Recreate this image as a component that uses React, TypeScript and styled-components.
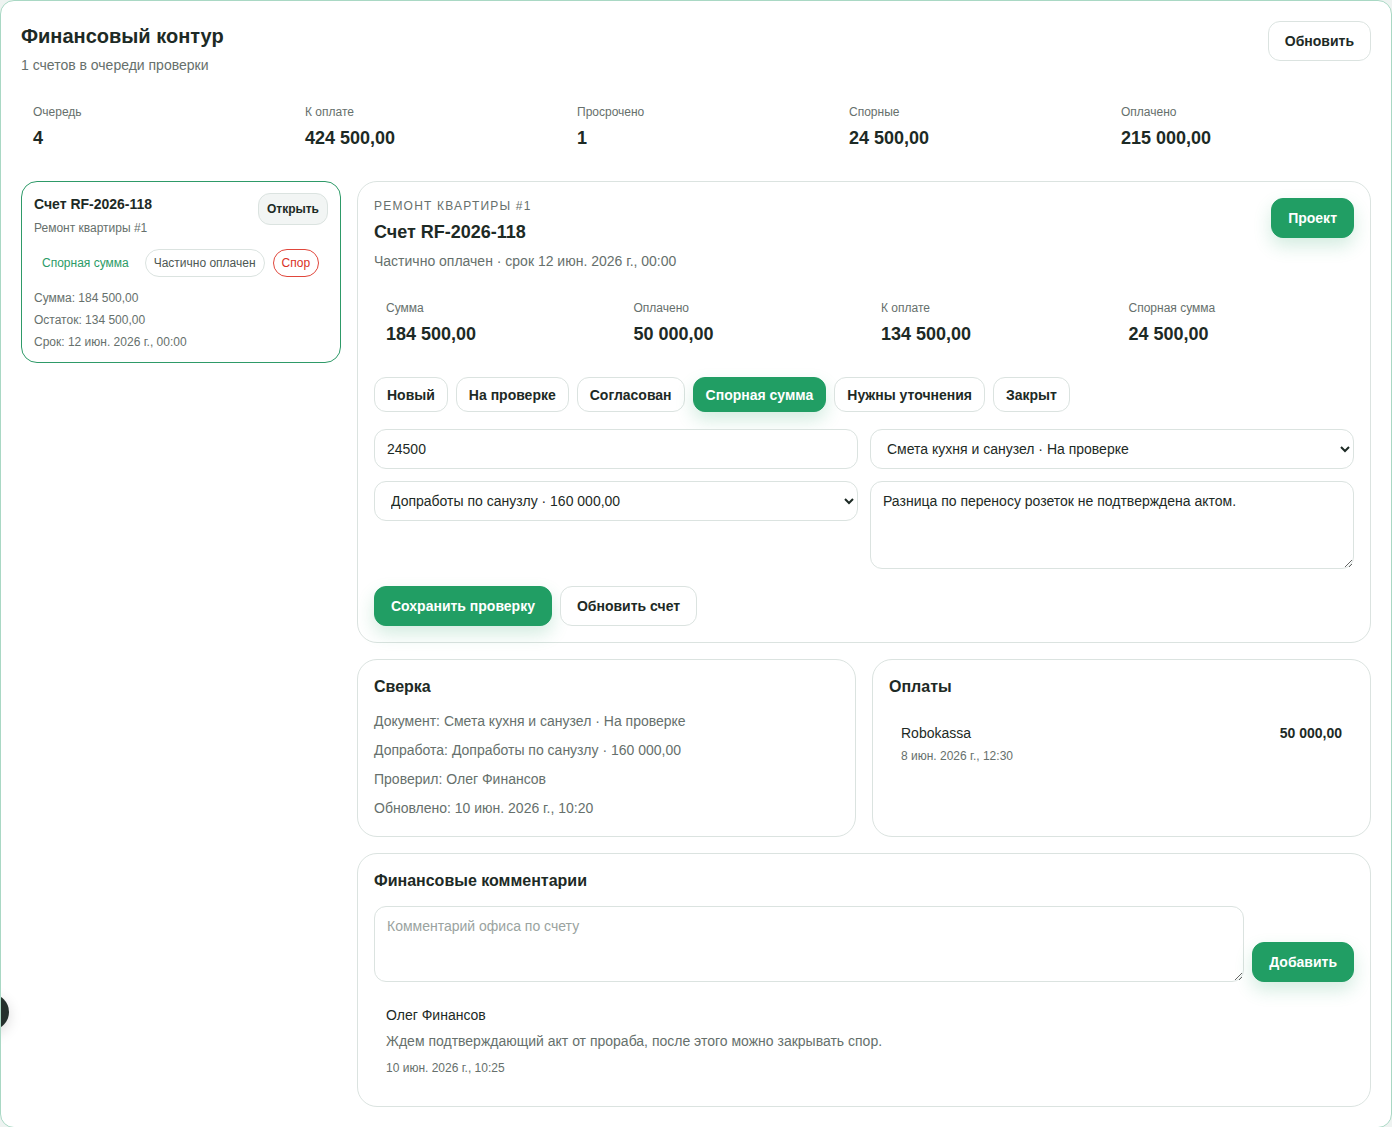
import React from 'react'
import styled, { createGlobalStyle, css } from 'styled-components'

const GlobalStyle = createGlobalStyle`
  * { box-sizing: border-box; }
  body {
    margin: 0;
    background: #eef3f1;
    font-family: 'Liberation Sans', Arial, sans-serif;
    color: #1d2a25;
  }
  button, input, select, textarea { font-family: inherit; }
`

const green = '#219e64'
const text = '#1d2a25'
const muted = '#66706c'
const line = '#dbe3e0'

const Frame = styled.div`
  position: relative;
  min-height: 1127px;
  padding: 20px;
  background: #fff;
  border: 1px solid #a9d8c4;
  border-radius: 14px;
  overflow: hidden;
`

const Header = styled.header`
  display: flex;
  justify-content: space-between;
  align-items: flex-start;
`

const PageTitle = styled.h1`
  margin: 0;
  font-size: 20px;
  line-height: 30px;
  font-weight: 700;
`

const PageSub = styled.div`
  margin-top: 4px;
  font-size: 14px;
  line-height: 20px;
  color: ${muted};
`

const Button = styled.button<{ $primary?: boolean; $small?: boolean }>`
  height: ${({ $small }) => ($small ? '32px' : '40px')};
  padding: 0 ${({ $small }) => ($small ? '8px' : '16px')};
  border-radius: 12px;
  border: 1px solid ${line};
  background: #fff;
  color: ${text};
  font-size: ${({ $small }) => ($small ? '12px' : '14px')};
  font-weight: 700;
  white-space: nowrap;
  cursor: pointer;
  ${({ $small }) =>
    $small &&
    css`
      background: #f2f5f4;
    `}
  ${({ $primary }) =>
    $primary &&
    css`
      background: ${green};
      border-color: ${green};
      color: #fff;
      box-shadow: 0 8px 18px rgba(33, 158, 100, 0.2);
    `}
`

const StatGrid = styled.div<{ $cols: number }>`
  display: grid;
  grid-template-columns: repeat(${({ $cols }) => $cols}, 1fr);
  gap: 10px;
`

const TopStats = styled(StatGrid)`
  margin-top: 17px;
`

const Stat = styled.div`
  padding: 12px;
`

const StatLabel = styled.div`
  font-size: 12px;
  line-height: 16px;
  color: ${muted};
`

const StatValue = styled.div`
  margin-top: 6px;
  font-size: 18px;
  line-height: 24px;
  font-weight: 700;
`

const Layout = styled.div`
  margin-top: 19px;
  display: grid;
  grid-template-columns: 320px 1fr;
  gap: 16px;
  align-items: start;
`

const QueueCard = styled.div`
  padding: 11px 12px 12px;
  border: 1px solid #2e9a68;
  border-radius: 16px;
  background: #fff;
`

const QueueHead = styled.div`
  display: flex;
  justify-content: space-between;
  align-items: flex-start;
`

const QueueTitle = styled.div`
  margin-top: 1px;
  font-size: 14px;
  line-height: 20px;
  font-weight: 700;
`

const QueueSub = styled.div`
  margin-top: 6px;
  font-size: 12px;
  line-height: 16px;
  color: ${muted};
`

const Chips = styled.div`
  margin-top: 13px;
  display: flex;
  gap: 8px;
`

const Chip = styled.span<{ $tone?: 'green' | 'red' | 'plain' }>`
  display: inline-flex;
  align-items: center;
  height: 28px;
  padding: 0 8px;
  border-radius: 14px;
  font-size: 12px;
  border: 1px solid ${line};
  color: #4d5753;
  ${({ $tone }) =>
    $tone === 'green' &&
    css`
      border: none;
      color: #2b9b67;
    `}
  ${({ $tone }) =>
    $tone === 'red' &&
    css`
      border-color: #e0463b;
      color: #d93025;
    `}
`

const Facts = styled.div`
  margin-top: 13px;
  display: flex;
  flex-direction: column;
  gap: 6px;
`

const Fact = styled.div`
  font-size: 12px;
  line-height: 16px;
  color: ${muted};
`

const Column = styled.div`
  display: flex;
  flex-direction: column;
  gap: 16px;
`

const Panel = styled.section<{ $bottom?: number }>`
  padding: 16px 16px ${({ $bottom }) => $bottom ?? 16}px;
  border: 1px solid ${line};
  border-radius: 20px;
  background: #fff;
`

const PanelHead = styled.div`
  display: flex;
  justify-content: space-between;
  align-items: flex-start;
`

const Eyebrow = styled.div`
  font-size: 12px;
  line-height: 16px;
  letter-spacing: 1.2px;
  text-transform: uppercase;
  color: ${muted};
`

const InvoiceTitle = styled.h2`
  margin: 6px 0 0;
  font-size: 18px;
  line-height: 24px;
  font-weight: 700;
`

const InvoiceSub = styled.div`
  margin-top: 7px;
  font-size: 14px;
  line-height: 20px;
  color: ${muted};
`

const InvoiceStats = styled(StatGrid)`
  margin-top: 17px;
`

const StatusRow = styled.div`
  margin-top: 19px;
  display: flex;
  gap: 8px;
`

const StatusButton = styled(Button)`
  height: 35px;
  padding: 0 12px;
`

const FormGrid = styled.div`
  margin-top: 17px;
  display: grid;
  grid-template-columns: 1fr 1fr;
  gap: 12px;
  align-items: start;
`

const fieldBase = css`
  width: 100%;
  border: 1px solid ${line};
  border-radius: 12px;
  background: #fff;
  color: ${text};
  font-size: 14px;
  outline: none;
`

const Input = styled.input`
  ${fieldBase};
  height: 40px;
  padding: 0 12px;
`

const Select = styled.select`
  ${fieldBase};
  height: 40px;
  padding: 0 8px 0 12px;
`

const TextArea = styled.textarea<{ $h: number }>`
  ${fieldBase};
  display: block;
  height: ${({ $h }) => $h}px;
  padding: 10px 12px;
  line-height: 18px;
  resize: vertical;
  &::placeholder {
    color: #9aa3a0;
  }
`

const Actions = styled.div`
  margin-top: 17px;
  display: flex;
  gap: 8px;
`

const Pair = styled.div`
  display: grid;
  grid-template-columns: 1fr 1fr;
  gap: 16px;
`

const CardTitle = styled.h3`
  margin: 0;
  font-size: 16px;
  line-height: 22px;
  font-weight: 700;
`

const RecLines = styled.div`
  margin-top: 13px;
  display: flex;
  flex-direction: column;
  gap: 9px;
`

const RecLine = styled.div`
  font-size: 14px;
  line-height: 20px;
  color: ${muted};
`

const Payment = styled.div`
  margin-top: 11px;
  padding: 12px;
  display: flex;
  justify-content: space-between;
  align-items: flex-start;
`

const PayName = styled.div`
  font-size: 14px;
  line-height: 20px;
  margin-top: 2px;
`

const PayDate = styled.div`
  margin-top: 5px;
  font-size: 12px;
  line-height: 16px;
  color: ${muted};
`

const PayAmount = styled.div`
  margin-top: 2px;
  font-size: 14px;
  line-height: 20px;
  font-weight: 700;
`

const CommentForm = styled.div`
  margin-top: 14px;
  display: flex;
  align-items: flex-end;
  gap: 8px;
`

const Comment = styled.div`
  margin-top: 11px;
  padding: 12px;
`

const CommentAuthor = styled.div`
  font-size: 14px;
  line-height: 20px;
`

const CommentText = styled.div`
  margin-top: 6px;
  font-size: 14px;
  line-height: 20px;
  color: ${muted};
`

const CommentDate = styled.div`
  margin-top: 9px;
  font-size: 12px;
  line-height: 16px;
  color: ${muted};
`

const FloatingDot = styled.div`
  position: absolute;
  left: -28px;
  top: 993px;
  width: 36px;
  height: 36px;
  border-radius: 50%;
  background: #25302c;
  box-shadow: 0 4px 14px rgba(0, 0, 0, 0.15);
`

const topStats = [
  ['Очередь', '4'],
  ['К оплате', '424 500,00'],
  ['Просрочено', '1'],
  ['Спорные', '24 500,00'],
  ['Оплачено', '215 000,00'],
]

const invoiceStats = [
  ['Сумма', '184 500,00'],
  ['Оплачено', '50 000,00'],
  ['К оплате', '134 500,00'],
  ['Спорная сумма', '24 500,00'],
]

const statuses = ['Новый', 'На проверке', 'Согласован', 'Спорная сумма', 'Нужны уточнения', 'Закрыт']

export default function App() {
  return (
    <>
      <GlobalStyle />
      <Frame>
        <Header>
          <div>
            <PageTitle>Финансовый контур</PageTitle>
            <PageSub>1 счетов в очереди проверки</PageSub>
          </div>
          <Button>Обновить</Button>
        </Header>

        <TopStats $cols={5}>
          {topStats.map(([label, value]) => (
            <Stat key={label}>
              <StatLabel>{label}</StatLabel>
              <StatValue>{value}</StatValue>
            </Stat>
          ))}
        </TopStats>

        <Layout>
          <QueueCard>
            <QueueHead>
              <div>
                <QueueTitle>Счет RF-2026-118</QueueTitle>
                <QueueSub>Ремонт квартиры #1</QueueSub>
              </div>
              <Button $small>Открыть</Button>
            </QueueHead>
            <Chips>
              <Chip $tone="green">Спорная сумма</Chip>
              <Chip>Частично оплачен</Chip>
              <Chip $tone="red">Спор</Chip>
            </Chips>
            <Facts>
              <Fact>Сумма: 184 500,00</Fact>
              <Fact>Остаток: 134 500,00</Fact>
              <Fact>Срок: 12 июн. 2026 г., 00:00</Fact>
            </Facts>
          </QueueCard>

          <Column>
            <Panel>
              <PanelHead>
                <div>
                  <Eyebrow>Ремонт квартиры #1</Eyebrow>
                  <InvoiceTitle>Счет RF-2026-118</InvoiceTitle>
                  <InvoiceSub>Частично оплачен · срок 12 июн. 2026 г., 00:00</InvoiceSub>
                </div>
                <Button $primary>Проект</Button>
              </PanelHead>

              <InvoiceStats $cols={4}>
                {invoiceStats.map(([label, value]) => (
                  <Stat key={label}>
                    <StatLabel>{label}</StatLabel>
                    <StatValue>{value}</StatValue>
                  </Stat>
                ))}
              </InvoiceStats>

              <StatusRow>
                {statuses.map((s) => (
                  <StatusButton key={s} $primary={s === 'Спорная сумма'}>
                    {s}
                  </StatusButton>
                ))}
              </StatusRow>

              <FormGrid>
                <Input defaultValue="24500" />
                <Select defaultValue="doc">
                  <option value="doc">Смета кухня и санузел · На проверке</option>
                </Select>
                <Select defaultValue="extra">
                  <option value="extra">Допработы по санузлу · 160 000,00</option>
                </Select>
                <TextArea $h={88} defaultValue="Разница по переносу розеток не подтверждена актом." />
              </FormGrid>

              <Actions>
                <Button $primary>Сохранить проверку</Button>
                <Button>Обновить счет</Button>
              </Actions>
            </Panel>

            <Pair>
              <Panel $bottom={18}>
                <CardTitle>Сверка</CardTitle>
                <RecLines>
                  <RecLine>Документ: Смета кухня и санузел · На проверке</RecLine>
                  <RecLine>Допработа: Допработы по санузлу · 160 000,00</RecLine>
                  <RecLine>Проверил: Олег Финансов</RecLine>
                  <RecLine>Обновлено: 10 июн. 2026 г., 10:20</RecLine>
                </RecLines>
              </Panel>
              <Panel $bottom={18}>
                <CardTitle>Оплаты</CardTitle>
                <Payment>
                  <div>
                    <PayName>Robokassa</PayName>
                    <PayDate>8 июн. 2026 г., 12:30</PayDate>
                  </div>
                  <PayAmount>50 000,00</PayAmount>
                </Payment>
              </Panel>
            </Pair>

            <Panel $bottom={18}>
              <CardTitle>Финансовые комментарии</CardTitle>
              <CommentForm>
                <TextArea $h={76} placeholder="Комментарий офиса по счету" />
                <Button $primary>Добавить</Button>
              </CommentForm>
              <Comment>
                <CommentAuthor>Олег Финансов</CommentAuthor>
                <CommentText>Ждем подтверждающий акт от прораба, после этого можно закрывать спор.</CommentText>
                <CommentDate>10 июн. 2026 г., 10:25</CommentDate>
              </Comment>
            </Panel>
          </Column>
        </Layout>
        <FloatingDot />
      </Frame>
    </>
  )
}
